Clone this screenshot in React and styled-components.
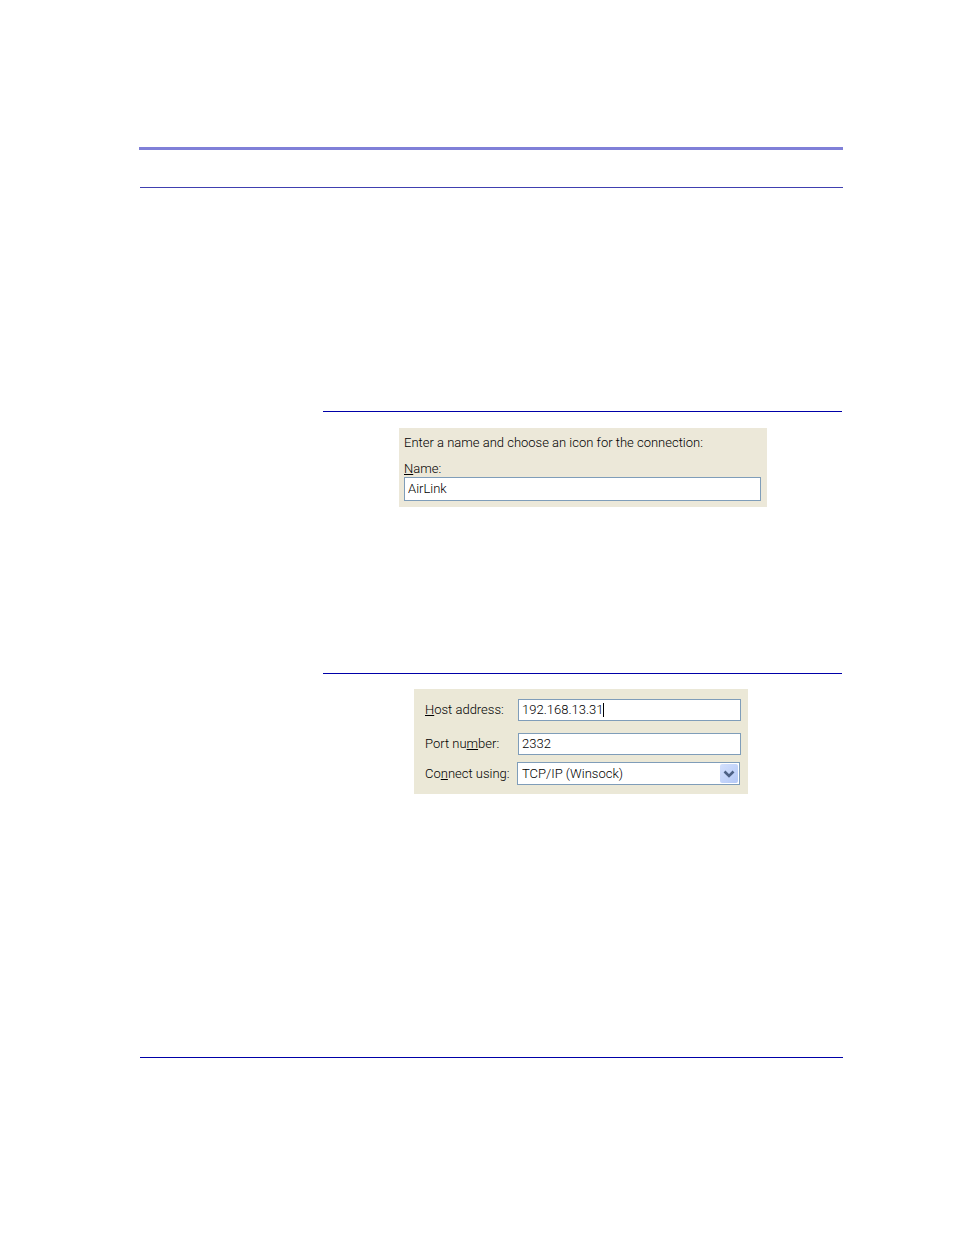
import React, { useState } from 'react';
import styled, { createGlobalStyle } from 'styled-components';

const GlobalStyle = createGlobalStyle`
  * {
    box-sizing: border-box;
  }

  body {
    margin: 0;
    background: #ffffff;
    color: #000000;
    font-family: Roboto, 'Liberation Sans', sans-serif;
    font-size: 13px;
    font-weight: 300;
    line-height: 16px;
  }
`;

const Page = styled.main`
  display: flex;
  flex-direction: column;
  min-height: 100vh;
  padding: 147px 111px 177px 139px;
`;

const Header = styled.header`
  height: 41px;
  border-top: 3px solid #8080d8;
`;

const HeaderRule = styled.hr`
  margin: 37px 0 0 1px;
  border: 0;
  border-top: 1px solid #4040b0;
`;

const Figure = styled.section`
  margin: ${({ $top }) => $top}px 1px 0 184px;
  border-top: 1px solid #0000a8;
  padding: ${({ $padding }) => $padding};
`;

const Panel = styled.form`
  display: flex;
  flex-direction: column;
  background: ${({ $color }) => $color};
  padding: ${({ $padding }) => $padding};
`;

const Paragraph = styled.p`
  margin: 0 0 10px;
`;

const Label = styled.label`
  margin-bottom: ${({ $gap }) => $gap || 0}px;
  white-space: nowrap;
`;

const Mnemonic = styled.span`
  text-decoration: underline;
`;

const Row = styled.div`
  display: grid;
  grid-template-columns: 93px 1fr;
  align-items: center;
  margin-bottom: ${({ $gap }) => $gap || 0}px;
`;

const Field = styled.div`
  display: flex;
  align-items: center;
  min-width: 0;
  height: ${({ $height }) => $height}px;
  border: 1px solid #7f9db9;
  background: #ffffff;
  padding: 0 2px 0 3px;
`;

const Input = styled.input`
  flex: ${({ $fit }) => ($fit ? '0 1 auto' : '1')};
  field-sizing: ${({ $fit }) => ($fit ? 'content' : 'fixed')};
  min-width: 0;
  border: 0;
  outline: 0;
  padding: 0;
  background: transparent;
  color: inherit;
  font: inherit;
`;

const Caret = styled.span`
  width: 1px;
  height: 14px;
  background: #000000;
`;

const SelectBox = styled(Field)`
  position: relative;
  margin: 0 1px 0 -1px;
  padding: 0 1px 0 4px;
`;

const Select = styled.select`
  flex: 1;
  min-width: 0;
  appearance: none;
  border: 0;
  outline: 0;
  padding: 0 20px 0 0;
  background: transparent;
  color: inherit;
  font: inherit;
`;

const Arrow = styled.span`
  position: absolute;
  top: 1px;
  right: 1px;
  display: flex;
  align-items: center;
  justify-content: center;
  width: 18px;
  height: 19px;
  border-radius: 2px;
  background: linear-gradient(135deg, #d3e0fd, #b4c8f6);
  pointer-events: none;
`;

const FooterRule = styled.hr`
  width: calc(100% - 1px);
  margin: auto 0 0 1px;
  border: 0;
  border-top: 1px solid #0000a8;
`;

const App = () => {
  const [name, setName] = useState('AirLink');
  const [host, setHost] = useState('192.168.13.31');
  const [port, setPort] = useState('2332');

  return (
    <>
      <GlobalStyle />
      <Page>
        <Header>
          <HeaderRule />
        </Header>

        <Figure $top={223} $padding="16px 75px 0 76px">
          <Panel $color="#ece8d9" $padding="7px 6px 6px 5px">
            <Paragraph>Enter a name and choose an icon for the connection:</Paragraph>
            <Label htmlFor="name">
              <Mnemonic>N</Mnemonic>ame:
            </Label>
            <Field $height={24}>
              <Input id="name" value={name} onChange={(e) => setName(e.target.value)} />
            </Field>
          </Panel>
        </Figure>

        <Figure $top={166} $padding="15px 94px 0 91px">
          <Panel $color="#ebe8d7" $padding="10px 7px 9px 11px">
            <Row $gap={12}>
              <Label htmlFor="host">
                <Mnemonic>H</Mnemonic>ost address:
              </Label>
              <Field $height={22}>
                <Input id="host" $fit value={host} onChange={(e) => setHost(e.target.value)} />
                <Caret />
              </Field>
            </Row>
            <Row $gap={7}>
              <Label htmlFor="port">
                Port nu<Mnemonic>m</Mnemonic>ber:
              </Label>
              <Field $height={22}>
                <Input id="port" value={port} onChange={(e) => setPort(e.target.value)} />
              </Field>
            </Row>
            <Row>
              <Label htmlFor="protocol">
                Co<Mnemonic>n</Mnemonic>nect using:
              </Label>
              <SelectBox $height={23}>
                <Select id="protocol">
                  <option>TCP/IP (Winsock)</option>
                </Select>
                <Arrow>
                  <svg width="12" height="8" viewBox="0 0 12 8" aria-hidden="true">
                    <path d="M1.5 1.5l4.5 4.5 4.5-4.5" fill="none" stroke="#4d6185" strokeWidth="2.6" />
                  </svg>
                </Arrow>
              </SelectBox>
            </Row>
          </Panel>
        </Figure>

        <FooterRule />
      </Page>
    </>
  );
};

export default App;
